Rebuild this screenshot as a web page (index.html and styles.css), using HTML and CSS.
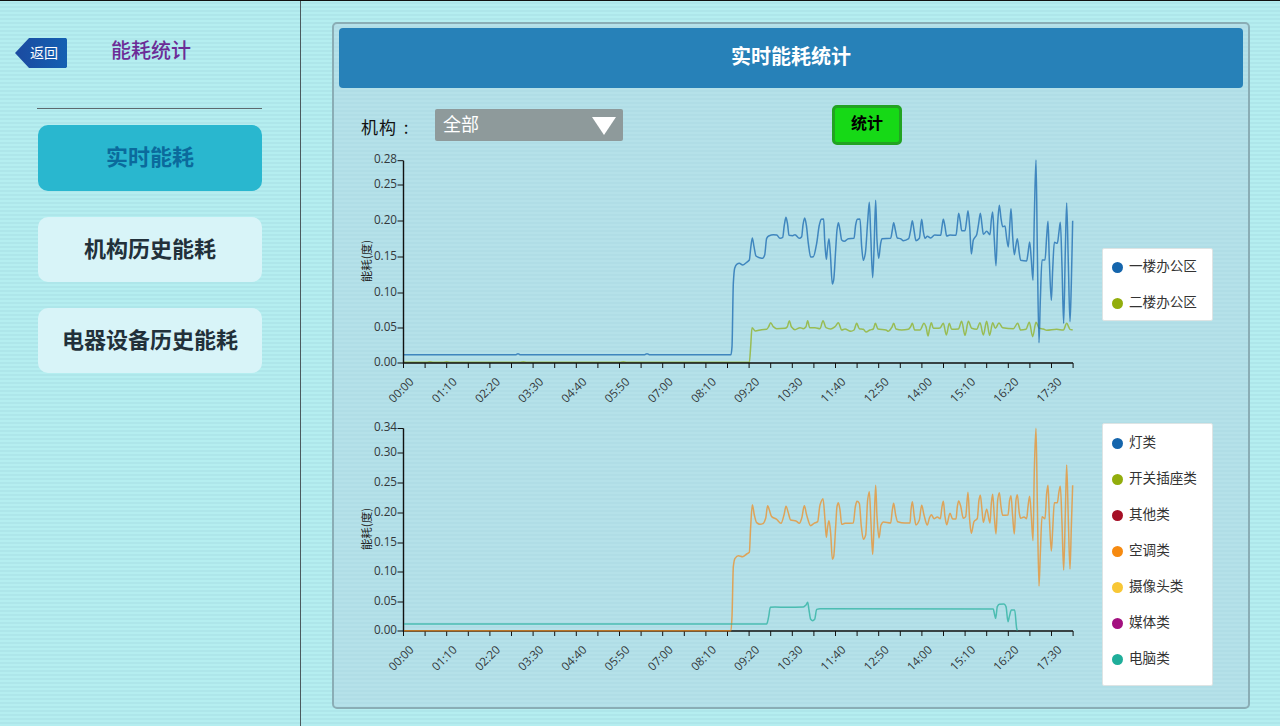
FILE: index.html
```html
<!DOCTYPE html>
<html lang="zh-CN">
<head>
<meta charset="utf-8">
<title>能耗统计</title>
<link rel="stylesheet" href="styles.css">
</head>
<body>
<div class="app">
  <aside class="sidebar">
    <div class="side-head">
      <div class="back">返回</div>
      <h1 class="side-title">能耗统计</h1>
    </div>
    <hr class="side-rule">
    <nav class="side-nav">
      <div class="nav-item active">实时能耗</div>
      <div class="nav-item">机构历史能耗</div>
      <div class="nav-item">电器设备历史能耗</div>
    </nav>
  </aside>
  <main class="main">
    <section class="panel">
      <header class="panel-head">实时能耗统计</header>
      <div class="toolbar">
        <span class="field-label">机构 :</span>
        <div class="select"><span>全部</span><svg class="caret" width="24" height="18" viewBox="0 0 24 18"><path d="M0 0H24L12 18Z" fill="#fff"/></svg></div>
        <button class="stat-btn">统计</button>
      </div>
      <div class="chart-row first">
        <svg id="chart1" class="chart" width="760" height="265" viewBox="340 150 760 265"></svg>
        <ul class="legend legend-a">
          <li><i class="dot c-blue"></i><span>一楼办公区</span></li>
          <li><i class="dot c-green"></i><span>二楼办公区</span></li>
        </ul>
      </div>
      <div class="chart-row second">
        <svg id="chart2" class="chart" width="760" height="275" viewBox="340 415 760 275"></svg>
        <ul class="legend legend-b">
          <li><i class="dot c-blue"></i><span>灯类</span></li>
          <li><i class="dot c-green"></i><span>开关插座类</span></li>
          <li><i class="dot c-red"></i><span>其他类</span></li>
          <li><i class="dot c-orange"></i><span>空调类</span></li>
          <li><i class="dot c-yellow"></i><span>摄像头类</span></li>
          <li><i class="dot c-purple"></i><span>媒体类</span></li>
          <li><i class="dot c-teal"></i><span>电脑类</span></li>
        </ul>
      </div>
    </section>
  </main>
</div>
<script src="chart.js"></script>
</body>
</html>
```
FILE: styles.css
```css
* { box-sizing: border-box; }
html, body { margin: 0; height: 726px; overflow: hidden; }
body {
  font-family: "Noto Sans CJK SC", "Noto Sans", sans-serif;
  background: repeating-linear-gradient(180deg, #b5eef0 0, #b5eef0 2px, #aee6ea 2px, #aee6ea 4px);
  border-top: 1px solid #111;
}
.app { display: flex; height: 725px; }
.sidebar { width: 301px; flex: none; border-right: 1px solid #4c5a5e; }
.side-head { display: flex; align-items: flex-start; padding: 37px 0 0 15px; height: 107px; }
.back {
  width: 52px; height: 30px; background: linear-gradient(90deg, #1b4aa0, #1460b2);
  clip-path: polygon(0 50%, 27% 0, 98% 0, 100% 4%, 100% 96%, 98% 100%, 27% 100%);
  color: #fff; font-size: 14px; line-height: 29px; padding-left: 15px; white-space: nowrap;
}
.side-title { margin: -2px 0 0 44px; font-size: 20px; line-height: 28px; font-weight: 500; color: #6c2c97; }
.side-rule { margin: 0 38px 0 37px; border: 0; border-top: 1px solid #5d6a6e; height: 1px; }
.side-nav { display: flex; flex-direction: column; gap: 26px; padding: 16px 38px 0; }
.nav-item {
  height: 65px; border-radius: 10px; background: #d8f4f8; color: #22303a; padding-bottom: 5px;
  font-size: 22px; font-weight: 700; display: flex; align-items: center; justify-content: center;
}
.nav-item.active { height: 66px; background: #29b7cf; color: #0b6a9c; padding-bottom: 7px; }
.main { flex: 1; padding: 21px 30px 17px 31px; }
.panel {
  height: 687px; border: 2px solid #8aadb5; border-radius: 5px; padding: 4px 5px;
  background: repeating-linear-gradient(180deg, #b5e1e9 0, #b5e1e9 2px, #b0dde6 2px, #b0dde6 4px);
}
.panel-head {
  height: 60px; background: #2781b8; border-radius: 4px; color: #fff; padding-bottom: 5px;
  font-size: 20px; font-weight: 700; display: flex; align-items: center; justify-content: center;
}
.toolbar { display: flex; align-items: flex-start; height: 62px; padding: 17px 0 0 22px; }
.field-label { width: 74px; font-size: 17px; line-height: 44px; color: #111; letter-spacing: 1px; word-spacing: 2px; white-space: nowrap; }
.select {
  width: 188px; height: 32px; margin-top: 4px; background: #8e9a9b; border-radius: 2px; color: #fff;
  font-size: 18px; line-height: 28px; padding: 0 7px 0 8px; display: flex; justify-content: space-between; align-items: flex-start;
}
.caret { margin-top: 8px; }
.stat-btn {
  width: 70px; height: 40px; margin-left: 209px; background: #16d916; border: 3px solid #22a322; border-radius: 5px;
  font: 700 16px "Noto Sans CJK SC", sans-serif; color: #000; padding: 0 0 7px;
}
.chart-row { display: flex; align-items: flex-start; }
.chart-row.first { height: 265px; }
.chart-row.second { height: 275px; }
.chart { display: block; flex: none; margin-left: 1px; }
.chart text { font-family: "Open Sans", "Noto Sans", sans-serif; font-size: 11.7px; fill: #33383b; }
.chart text.ylab { font-family: "Noto Sans CJK SC", sans-serif; font-size: 11.5px; fill: #222; }
.legend {
  list-style: none; margin: 0 0 0 2px; padding: 0; width: 111px; background: #fff;
  border: 1px solid #dde4e4; border-radius: 2px; color: #333; font-size: 13.6px;
  display: flex; flex-direction: column; gap: 14px;
}
.legend-a { height: 73px; margin-top: 98px; padding-top: 7px; }
.legend-b { height: 263px; margin-top: 8px; padding-top: 8px; }
.legend li { display: flex; align-items: center; height: 22px; padding-left: 9px; }
.legend li span { margin-top: -5px; }
.dot { width: 11px; height: 11px; border-radius: 50%; margin-right: 6px; flex: none; }
.c-blue { background: #1565ac; }
.c-green { background: #92ad0c; }
.c-red { background: #a50f26; }
.c-orange { background: #f68a10; }
.c-yellow { background: #f8c736; }
.c-purple { background: #a3107f; }
.c-teal { background: #1fae9a; }
```
FILE: chart.js
```js
var NS = "http://www.w3.org/2000/svg";
function el(parent, name, attrs, text) {
  var e = document.createElementNS(NS, name);
  for (var k in attrs) e.setAttribute(k, attrs[k]);
  if (text) e.textContent = text;
  parent.appendChild(e);
  return e;
}
// Monotone cubic through points given in crop coordinates (3x)
function smooth(pts, ox, oy) {
  var p = [], i;
  for (i = 0; i < pts.length; i += 2) p.push([ox + pts[i] / 3, oy + pts[i + 1] / 3]);
  var n = p.length, s = [], m = [];
  for (i = 0; i < n - 1; i++) s.push((p[i + 1][1] - p[i][1]) / (p[i + 1][0] - p[i][0]));
  m[0] = s[0]; m[n - 1] = s[n - 2];
  for (i = 1; i < n - 1; i++) {
    m[i] = s[i - 1] * s[i] <= 0 ? 0 : 2 * s[i - 1] * s[i] / (s[i - 1] + s[i]);
  }
  var d = "M" + p[0][0].toFixed(2) + " " + p[0][1].toFixed(2);
  for (i = 0; i < n - 1; i++) {
    var h = (p[i + 1][0] - p[i][0]) / 3;
    d += "C" + (p[i][0] + h).toFixed(2) + " " + (p[i][1] + m[i] * h).toFixed(2) + " " +
      (p[i + 1][0] - h).toFixed(2) + " " + (p[i + 1][1] - m[i + 1] * h).toFixed(2) + " " +
      p[i + 1][0].toFixed(2) + " " + p[i + 1][1].toFixed(2);
  }
  return d;
}
function axes(svg, top, bottom, ticks, ylabY) {
  var x0 = 403.5, step = 21.6, i;
  var labels = ["00:00","01:10","02:20","03:30","04:40","05:50","07:00","08:10","09:20","10:30","11:40","12:50","14:00","15:10","16:20","17:30"];
  for (i = 0; i < 32; i++) {
    var x = x0 + step * i;
    el(svg, "line", { x1: x, x2: x, y1: bottom, y2: bottom + 5, stroke: "#111", "stroke-width": 1 });
    if (i % 2 === 0) {
      var lx = x - 3, ly = bottom + 26.5;
      el(svg, "text", { x: lx, y: ly, "text-anchor": "middle", "dominant-baseline": "central", transform: "rotate(-45 " + lx + " " + ly + ")" }, labels[i / 2]);
    }
  }
  ticks.forEach(function (t) {
    el(svg, "line", { x1: x0 - 6, x2: x0, y1: t[1], y2: t[1], stroke: "#111", "stroke-width": 1 });
    el(svg, "text", { x: 397, y: t[1] - 2.5, "text-anchor": "end", "dominant-baseline": "central" }, t[0]);
  });
  el(svg, "text", { "class": "ylab", x: 366, y: ylabY, "text-anchor": "middle", "dominant-baseline": "central", transform: "rotate(-90 366 " + ylabY + ")" }, "能耗(度)");
}
function line(svg, pts, ox, oy, color, op) {
  el(svg, "path", { d: smooth(pts, ox, oy), fill: "none", stroke: color, "stroke-width": 1.5, "stroke-opacity": op, "stroke-linejoin": "round" });
}
function axisLines(svg, top, bottom) {
  el(svg, "path", { d: "M403.5 " + top + "V" + bottom + "H1073", fill: "none", stroke: "#111", "stroke-width": 1.4 });
}

var c1 = document.getElementById("chart1");
axes(c1, 160.7, 363, [["0.28",160.7],["0.25",185],["0.20",221],["0.15",257],["0.10",293],["0.05",328],["0.00",363]], 261);
line(c1, [-948,637,-880,637,-870,635,-860,637,-830,637,-820,635,-810,637,-600,637,-590,635,-580,637,-300,637,-290,635,-280,637,88,637,92,590,96,533,106,543,125,539,140,538,146,530,152,518,160,530,170,536,195,535,202,530,208,512,214,530,225,539,240,533,250,536,258,530,263,512,269,533,285,533,300,536,309,512,318,533,332,537,345,530,355,518,365,540,375,537,392,544,402,540,410,520,418,536,430,538,438,546,450,540,460,537,466,520,474,537,498,540,505,544,515,533,521,520,528,537,545,540,565,538,572,530,577,520,584,540,600,540,612,520,618,530,624,558,628,540,634,518,640,535,650,535,660,534,670,520,679,555,688,520,695,538,715,537,725,514,735,556,745,514,755,535,770,538,780,518,790,555,800,514,809,556,818,518,826,535,837,519,848,533,880,536,893,520,902,540,918,538,928,517,938,560,948,517,958,535,970,537,980,541,1010,538,1030,540,1040,520,1050,538,1058,540], 720, 150, "#8fae1b", 0.72);
line(c1, [-948,614,-612,614,-606,611,-600,614,-226,614,-219,611,-212,614,33,614,36,590,40,400,44,355,50,343,58,340,68,345,80,337,88,330,92,295,97,264,102,290,108,318,118,323,128,325,134,315,140,265,146,258,160,254,170,255,180,265,188,262,193,225,198,202,203,225,207,256,218,257,225,254,238,265,245,260,249,225,254,204,259,225,265,280,272,321,280,320,290,280,298,225,304,208,311,207,314,270,319,328,322,300,327,266,331,310,337,402,341,390,347,300,351,240,355,218,360,240,365,270,373,274,385,266,402,265,407,225,412,208,420,207,425,290,430,331,436,310,443,215,448,157,452,250,458,383,462,300,467,151,471,270,476,325,482,280,486,266,512,265,517,240,521,218,526,240,532,264,542,266,550,272,566,266,572,240,577,212,582,240,588,272,598,265,605,208,610,245,615,265,622,259,632,264,644,255,662,256,666,230,670,208,675,230,680,258,690,255,708,256,712,225,716,190,721,215,725,242,735,242,740,210,744,182,749,230,754,312,760,270,770,254,776,220,781,190,786,225,790,253,800,244,810,254,814,210,818,186,823,270,828,347,833,220,838,166,843,205,848,230,855,228,860,265,865,291,870,215,873,176,878,260,883,314,888,285,892,266,898,310,902,331,920,333,924,310,929,276,934,330,939,391,943,200,948,30,952,300,957,578,961,450,966,330,975,330,980,260,984,214,988,330,994,451,998,360,1003,277,1012,280,1017,245,1021,217,1026,350,1031,520,1036,300,1040,159,1045,340,1050,515,1054,400,1058,212], 720, 150, "#1a68b0", 0.75);
axisLines(c1, 160.7, 363);

var c2 = document.getElementById("chart2");
axes(c2, 428.5, 631, [["0.34",428.5],["0.30",453],["0.25",483],["0.20",513],["0.15",543],["0.10",572],["0.05",602],["0.00",631]], 529);
axisLines(c2, 428.5, 631);
line(c2, [-948,632,33,632,36,590,40,440,45,415,55,407,68,410,80,402,88,397,92,320,97,254,103,285,110,308,120,313,130,310,137,295,143,257,148,270,155,290,170,298,183,310,192,285,198,259,204,275,212,300,228,303,238,310,245,295,253,257,260,285,272,317,282,310,293,305,300,255,309,236,315,300,319,352,323,320,327,302,332,340,337,418,341,410,347,320,351,260,355,248,360,270,365,313,375,310,400,309,406,260,411,244,418,250,424,320,430,358,437,345,443,240,448,215,453,310,458,403,462,320,467,196,471,290,477,354,483,315,490,306,512,309,517,270,521,250,527,285,533,305,555,309,570,309,573,270,577,245,583,290,588,315,598,300,605,256,612,285,622,315,628,295,634,284,642,296,652,291,661,296,666,260,670,244,675,290,680,314,690,280,698,297,708,297,712,260,716,243,722,258,730,295,737,290,744,217,749,300,754,340,762,305,772,295,777,240,781,226,786,270,790,307,800,268,810,309,814,250,818,223,823,290,828,342,833,240,838,218,843,260,848,286,864,285,869,240,873,227,878,290,883,342,888,240,892,224,898,280,902,295,912,291,920,296,924,260,929,229,934,290,939,362,943,150,948,25,952,250,957,498,961,400,966,290,975,296,980,220,984,196,988,290,994,393,998,330,1003,248,1012,248,1017,215,1021,199,1026,310,1031,450,1036,280,1040,135,1045,300,1050,447,1054,320,1058,196], 720, 420, "#f08a1c", 0.7);
line(c2, [-948,612,140,612,146,590,151,562,165,561,200,562,250,561,258,555,263,547,267,570,272,598,278,602,284,598,290,568,300,566,820,567,823,580,827,595,832,560,838,553,852,552,858,560,864,605,868,590,874,570,884,570,890,625,892,632], 720, 420, "#1fae9a", 0.7);
```
